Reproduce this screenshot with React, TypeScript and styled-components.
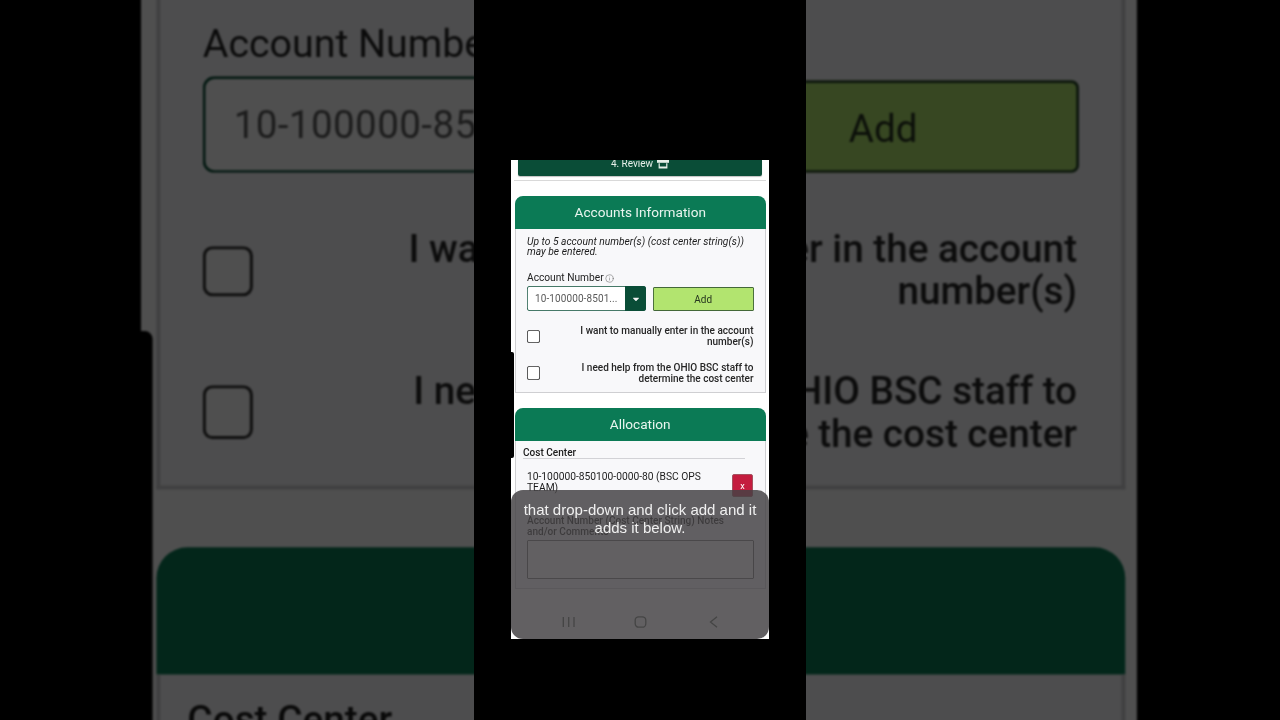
import React from "react";
import styled, { createGlobalStyle } from "styled-components";
import { FaCaretDown } from "react-icons/fa";
import { Info } from "lucide-react";

const GlobalStyle = createGlobalStyle`
  html, body {
    margin: 0;
    padding: 0;
    background: #000;
    overflow: hidden;
  }
`;

const Stage = styled.div`
  position: relative;
  width: 1280px;
  height: 720px;
  overflow: hidden;
  background: #000;
  display: flex;
  justify-content: center;
`;

/* blown up, darkened copy of the phone behind the video column */
const Backdrop = styled.div`
  position: absolute;
  left: 141px;
  top: -410px;
  transform: scale(3.86);
  transform-origin: 0 0;
  filter: brightness(0.31) blur(0.3px);
`;

const VideoColumn = styled.div`
  position: relative;
  width: 332px;
  height: 720px;
  background: #000;
  display: flex;
  justify-content: center;
  padding-top: 160px;
  box-sizing: border-box;
`;

const Phone = styled.div`
  position: relative;
  width: 258px;
  height: 479px;
  filter: blur(0.25px);
`;

const ScreenBox = styled.div`
  position: relative;
  width: 258px;
  height: 479px;
  overflow: hidden;
  background: #fff;
  font-family: Roboto, "Liberation Sans", sans-serif;
  color: #1c1c1c;
`;

const SideTab = styled.div`
  position: absolute;
  left: 0;
  top: 192px;
  width: 2.5px;
  height: 106px;
  background: #000;
  border-radius: 0 2px 2px 0;
`;

const ReviewBar = styled.div`
  height: 16px;
  margin: 0 7px;
  background: #0a4d37;
  border-radius: 0 0 2px 2px;
  box-shadow: 0 1px 1px rgba(0, 0, 0, 0.25);
  color: #e6efe9;
  font-size: 10px;
  line-height: 8px;
  display: flex;
  justify-content: center;
  gap: 4px;
`;

const Divider = styled.div`
  height: 1px;
  margin: 4px 3px 0;
  background: #d9d9d9;
`;

const Card = styled.section`
  width: 250.5px;
  margin: 15px 0 0 4px;
`;

const CardHeader = styled.h2`
  margin: 0;
  height: 33px;
  background: #0b7a55;
  border-radius: 8px 8px 0 0;
  color: #e9f5ef;
  font-size: 13.6px;
  font-weight: 400;
  line-height: 33px;
  text-align: center;
`;

const CardBody = styled.div<{ $height: number }>`
  height: ${(p) => p.$height}px;
  box-sizing: border-box;
  padding: 0 11px;
  background: #f8f8fa;
  border: 1px solid #cfcfd2;
  border-top: 0;
`;

const Hint = styled.p`
  margin: 0;
  padding-top: 7.5px;
  font-size: 10.25px;
  font-style: italic;
  line-height: 10px;
`;

const FieldLabel = styled.div`
  margin-top: 15.75px;
  font-size: 10.2px;
  line-height: 12px;
  display: flex;
  align-items: center;
  gap: 1px;
  color: #222;
`;

const AddRow = styled.div`
  margin-top: 2px;
  display: flex;
  align-items: flex-start;
  gap: 7px;
`;

const Select = styled.div`
  width: 119px;
  height: 25px;
  display: flex;
  background: #fff;
  box-shadow: inset 0 0 0 0.7px #0a4d37;
  border-radius: 3px;
  overflow: hidden;
`;

const SelectValue = styled.div`
  flex: 1;
  padding: 1px 0 0 8px;
  font-size: 10px;
  line-height: 24px;
  color: #5a5a5a;
  letter-spacing: 0.1px;
`;

const SelectCaret = styled.div`
  width: 21px;
  background: #0a4d37;
  color: #f2f2f2;
  display: flex;
  align-items: center;
  justify-content: center;
`;

const AddButton = styled.button`
  width: 100.5px;
  height: 23.5px;
  margin-top: 1px;
  padding: 0;
  background: #b2e46f;
  border: 0;
  box-shadow: inset 0 0 0 0.7px #1f3f27;
  border-radius: 2px;
  font-family: inherit;
  font-size: 10px;
  color: #26351f;
`;

const CheckRow = styled.label<{ $top: number }>`
  margin-top: ${(p) => p.$top}px;
  display: flex;
  align-items: flex-start;
  justify-content: space-between;
`;

const CheckBox = styled.input.attrs({ type: "checkbox" })`
  appearance: none;
  flex: none;
  width: 13.2px;
  height: 13.2px;
  margin: 4.7px 0 0;
  background: #fff;
  box-shadow: inset 0 0 0 0.8px #333;
  border-radius: 2.5px;
`;

const CheckText = styled.span`
  width: 190px;
  font-size: 10.03px;
  font-weight: 500;
  line-height: 11px;
  text-align: right;
  color: #262626;
`;

const AllocationHeading = styled.div`
  width: 222px;
  height: 11.5px;
  margin-left: -4px;
  padding-top: 6px;
  border-bottom: 1px solid #d2d2d6;
  font-size: 10.05px;
  font-weight: 500;
  line-height: 12px;
`;

const AllocationRow = styled.div`
  margin-top: 13px;
  display: flex;
  justify-content: space-between;
  align-items: flex-start;
`;

const AllocationText = styled.div`
  width: 190px;
  font-size: 10.25px;
  line-height: 10.5px;
`;

const RemoveButton = styled.button`
  width: 21px;
  height: 23px;
  margin: 2px 0.5px 0 0;
  padding: 0;
  background: #c41c3e;
  border: 1px solid #a5525f;
  border-radius: 2px;
  color: #fff;
  font-family: inherit;
  font-size: 9px;
`;

const NotesLabel = styled.div`
  margin-top: 18px;
  font-size: 10.05px;
  font-weight: 500;
  line-height: 11px;
`;

const Notes = styled.textarea`
  display: block;
  width: 100%;
  height: 38.5px;
  margin-top: 3px;
  box-sizing: border-box;
  background: #fff;
  border: 0;
  box-shadow: inset 0 0 0 0.8px #3a3a3a;
  border-radius: 2px;
  resize: none;
`;

const CaptionSheet = styled.div`
  position: absolute;
  left: 0;
  top: 330px;
  width: 258px;
  height: 149px;
  background: rgba(68, 66, 68, 0.84);
  border-radius: 12px;
`;

const CaptionText = styled.div`
  padding-top: 11px;
  font-family: "Liberation Sans", Arial, sans-serif;
  font-size: 15px;
  line-height: 18px;
  text-align: center;
  color: #f0f0f0;
`;

const NavBar = styled.div`
  position: absolute;
  left: 0;
  right: 0;
  bottom: 11px;
  display: flex;
  justify-content: center;
  gap: 59px;
  color: #454545;
`;

function ReviewIcon() {
  return (
    <svg width="12" height="9" viewBox="0 0 12 9">
      <path d="M0 0h12v2.8H0z" fill="#e6efe9" />
      <path d="M1.6 3.2h1.2v3.4h6.4V3.2h1.2v5.3H1.6z" fill="#e6efe9" />
    </svg>
  );
}

function NavIcons() {
  return (
    <NavBar>
      <svg width="14" height="12" viewBox="0 0 14 12" fill="none" stroke="currentColor" strokeWidth="1.3">
        <path d="M2.3 1v10M7.7 1v10M13 1v10" />
      </svg>
      <svg width="13" height="12" viewBox="0 0 13 12" fill="none" stroke="currentColor" strokeWidth="1.3">
        <rect x="1.2" y="0.8" width="10.6" height="10.4" rx="3.5" />
      </svg>
      <svg width="13" height="12" viewBox="0 0 13 12" fill="none" stroke="currentColor" strokeWidth="1.3">
        <path d="M11 0.8L4.5 6l6.5 5.2" />
      </svg>
    </NavBar>
  );
}

function Screen() {
  return (
    <ScreenBox>
      <ReviewBar>
        <span>4. Review</span>
        <ReviewIcon />
      </ReviewBar>
      <Divider />

      <Card>
        <CardHeader>Accounts Information</CardHeader>
        <CardBody $height={163.5}>
          <Hint>
            Up to 5 account number(s) (cost center string(s))
            <br />
            may be entered.
          </Hint>
          <FieldLabel>
            Account Number <Info size={9} strokeWidth={1.4} color="#666" />
          </FieldLabel>
          <AddRow>
            <Select>
              <SelectValue>10-100000-8501...</SelectValue>
              <SelectCaret>
                <FaCaretDown size={10} />
              </SelectCaret>
            </Select>
            <AddButton>Add</AddButton>
          </AddRow>
          <CheckRow $top={13.65}>
            <CheckBox />
            <CheckText>I want to manually enter in the account number(s)</CheckText>
          </CheckRow>
          <CheckRow $top={14.85}>
            <CheckBox />
            <CheckText>I need help from the OHIO BSC staff to determine the cost center</CheckText>
          </CheckRow>
        </CardBody>
      </Card>

      <Card>
        <CardHeader>Allocation</CardHeader>
        <CardBody $height={148}>
          <AllocationHeading>Cost Center</AllocationHeading>
          <AllocationRow>
            <AllocationText>10-100000-850100-0000-80 (BSC OPS TEAM)</AllocationText>
            <RemoveButton>x</RemoveButton>
          </AllocationRow>
          <NotesLabel>
            Account Number (Cost Center String) Notes
            <br />
            and/or Comments
          </NotesLabel>
          <Notes />
        </CardBody>
      </Card>

      <SideTab />
    </ScreenBox>
  );
}

export default function App() {
  return (
    <>
      <GlobalStyle />
      <Stage>
        <Backdrop aria-hidden="true">
          <Screen />
        </Backdrop>
        <VideoColumn>
          <Phone>
            <Screen />
            <CaptionSheet>
              <CaptionText>
                that drop-down and click add and it
                <br />
                adds it below.
              </CaptionText>
              <NavIcons />
            </CaptionSheet>
          </Phone>
        </VideoColumn>
      </Stage>
    </>
  );
}
